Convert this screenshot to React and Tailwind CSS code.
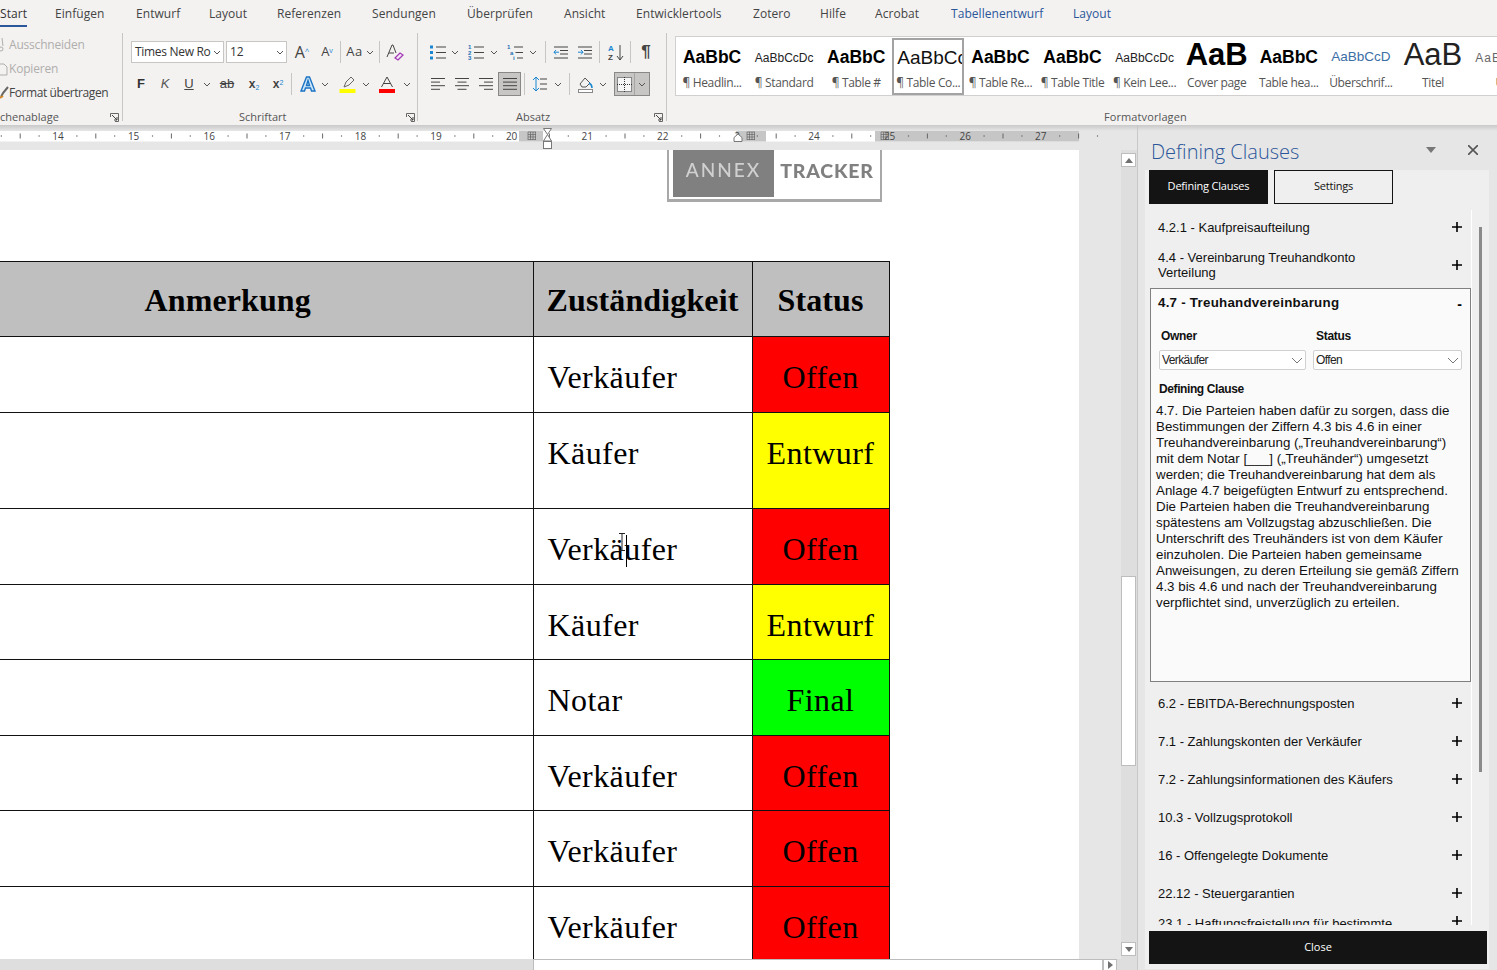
import React from 'react';

const UI = { fontFamily: '"Open Sans", "Noto Sans", sans-serif' };
const ARIAL = { fontFamily: '"Liberation Sans", Arial, sans-serif' };
const SERIF = { fontFamily: '"Liberation Serif", "Times New Roman", serif' };

const tabs = [
  ['Start', 0, 27, true], ['Einfügen', 55, 50], ['Entwurf', 136, 43], ['Layout', 209, 38], ['Referenzen', 277, 65],
  ['Sendungen', 372, 65], ['Überprüfen', 467, 67], ['Ansicht', 564, 41], ['Entwicklertools', 636, 86], ['Zotero', 753, 39],
  ['Hilfe', 820, 26], ['Acrobat', 875, 47], ['Tabellenentwurf', 951, 91, false, true], ['Layout', 1073, 38, false, true],
];

function Chevron({ className = '' }) {
  return <svg width="8" height="5" viewBox="0 0 8 5" className={className}><path d="M1 1l3 3 3-3" fill="none" stroke="#555" strokeWidth="1" /></svg>;
}

function Slot({ w, children, className = '' }) {
  return <div className={`flex h-[24px] shrink-0 items-center justify-center ${className}`} style={{ width: w }}>{children}</div>;
}

function Sep() {
  return <div className="mx-0 h-[22px] w-px shrink-0 bg-[#c8c6c4]" />;
}

function GroupSep() {
  return <div className="mt-[6px] h-[88px] w-px shrink-0 bg-[#c8c6c4]" />;
}

function Lines({ kind }) {
  const rows = {
    left: [[1, 15], [1, 10], [1, 15], [1, 10]],
    center: [[1, 15], [3.5, 12.5], [1, 15], [3.5, 12.5]],
    right: [[1, 15], [6, 15], [1, 15], [6, 15]],
    just: [[1, 15], [1, 15], [1, 15], [1, 15]],
  }[kind];
  return (
    <svg width="16" height="14" viewBox="0 0 16 14">
      {rows.map((r, i) => <path key={i} d={`M${r[0]} ${1.5 + i * 3.6}H${r[1]}`} stroke="#444" strokeWidth="1" />)}
    </svg>
  );
}

function Launcher() {
  return (
    <svg width="9" height="9" viewBox="0 0 9 9" className="shrink-0">
      <path d="M.5 4V.5H8.500V8.500H5" fill="none" stroke="#666" />
      <path d="M2 2l5 5M7 4v3H4" fill="none" stroke="#444" />
    </svg>
  );
}

function ListIcon({ type }) {
  return (
    <svg width="17" height="15" viewBox="0 0 17 15">
      {[2, 7.500, 13].map((y, i) => (
        <g key={i}>
          {type === 'bullet' && <rect x="0" y={y - 1.5} width="3" height="3" fill="#1a86d0" />}
          {type === 'num' && <text x="0" y={y + 2} fontSize="6" fontWeight="700" fill="#1a6fb5" fontFamily="Liberation Sans">{i + 1}</text>}
          {type === 'multi' && <text x={i * 3} y={y + 2} fontSize="6" fontWeight="700" fill="#1a6fb5" fontFamily="Liberation Sans">{['1', 'a', 'i'][i]}</text>}
          <path d={`M${type === 'multi' ? 7 + i * 1.5 : 6} ${y}H16`} stroke="#444" />
        </g>
      ))}
    </svg>
  );
}

function Indent({ flip }) {
  return (
    <svg width="16" height="13" viewBox="0 0 16 13">
      <path d="M1 1h14M7 4.500h8M7 8h8M1 12h14" stroke="#444" />
      <path d={flip ? 'M1 6.200h5M4 4l2 2.200L4 8.500' : 'M6 6.200H1M3 4L1 6.200l2 2.300'} fill="none" stroke="#1a86d0" />
    </svg>
  );
}

const styleItems = [
  ['AaBbC', '¶ Headlin...', 'bold'], ['AaBbCcDc', '¶ Standard', 'small'], ['AaBbC', '¶ Table #', 'bold'], ['AaBbCc', '¶ Table Co...', 'light', true],
  ['AaBbC', '¶ Table Re...', 'bold'], ['AaBbC', '¶ Table Title', 'bold'], ['AaBbCcDc', '¶ Kein Lee...', 'small'], ['AaB', 'Cover page', 'cover'],
  ['AaBbC', 'Table hea...', 'bold'], ['AaBbCcD', 'Überschrif...', 'blue'], ['AaB', 'Titel', 'title'], ['AaBbCcD', 'Unt', 'sub'],
];

const previewCls = {
  bold: 'text-[17.5px] font-bold text-black',
  small: 'text-[12px] text-[#222]',
  light: 'text-[19px] text-[#111] self-start ml-[3px]',
  cover: 'text-[31px] leading-[31px] mt-[-6px] font-bold text-black',
  blue: 'text-[13.5px] text-[#3a6ea5]',
  title: 'text-[31px] leading-[31px] mt-[-6px] font-extralight text-[#222]',
  sub: 'text-[12px] tracking-[1px] text-[#666]',
};

function StyleCard({ item }) {
  const [t, label, kind, sel] = item;
  return (
    <div className={`flex h-[57px] w-[72.1px] shrink-0 flex-col items-center overflow-hidden ${sel ? 'border-2 border-[#a3a3a3]' : 'border-2 border-transparent'}`}>
      <div className="flex h-[31px] w-full shrink-0 items-center justify-start overflow-hidden whitespace-nowrap pt-[4px]" style={ARIAL}>
        <span className={`${previewCls[kind]} ${kind === 'light' ? '' : 'mx-auto'}`}>{t}</span>
      </div>
      <div className="whitespace-nowrap pt-[4px] text-[12px] leading-[16px] tracking-[-0.35px] text-[#555]" style={UI}>{label}</div>
    </div>
  );
}

function Ribbon() {
  return (
    <div className="flex h-[98px] shrink-0 bg-[#f3f2f1] text-[#444]" style={UI}>
      {/* clipboard */}
      <div className="mt-[6px] flex h-[92px] w-[122px] shrink-0 flex-col overflow-hidden">
        <div className="flex h-[24px] shrink-0 items-center text-[12px] tracking-[-0.2px] text-[#b0aeac]">
          <svg width="9" height="14" viewBox="0 0 9 14" className="shrink-0"><path d="M2 0l1 8" stroke="#b0aeac" fill="none" /><circle cx="1" cy="11" r="2" fill="none" stroke="#b0aeac" /></svg>
          <span>Ausschneiden</span>
        </div>
        <div className="flex h-[24px] shrink-0 items-center text-[12px] tracking-[-0.2px] text-[#b0aeac]">
          <svg width="9" height="14" viewBox="0 0 9 14" className="shrink-0"><path d="M0 2h4l3 3v8H0" fill="none" stroke="#b0aeac" /></svg>
          <span>Kopieren</span>
        </div>
        <div className="flex h-[24px] shrink-0 items-center text-[12px] tracking-[-0.42px] text-[#444]">
          <svg width="9" height="14" viewBox="0 0 9 14" className="shrink-0"><path d="M8 1L3 7 1 11" stroke="#666" strokeWidth="2" fill="none" /><path d="M0 12l3-2" stroke="#d88a2b" strokeWidth="2" /></svg>
          <span>Format übertragen</span>
        </div>
        <div className="mt-[5px] flex h-[14px] shrink-0 items-center justify-between pr-[3px] text-[11px] text-[#555]">
          <span>chenablage</span>
          <Launcher />
        </div>
      </div>
      <GroupSep />

      {/* font */}
      <div className="mt-[13px] flex h-[85px] w-[294px] shrink-0 flex-col">
        <div className="flex h-[24px] shrink-0 items-center pl-[8px]">
          <div className="flex h-[22px] w-[93px] items-center justify-between border border-[#c8c6c4] bg-white pl-[3px] pr-[2px] text-[12px] tracking-[-0.3px] text-[#333]"><span>Times New Ro</span><Chevron /></div>
          <div className="ml-[2px] flex h-[22px] w-[61px] items-center justify-between border border-[#c8c6c4] bg-white pl-[3px] pr-[2px] text-[12px] text-[#333]"><span>12</span><Chevron /></div>
          <Slot w={24} className="ml-[3px]"><span className="relative text-[16px]" style={UI}>A<sup className="text-[8px] text-[#1a86d0]">^</sup></span></Slot>
          <Slot w={24} className="ml-[1px]"><span className="text-[13px]">A<sup className="text-[7px] text-[#1a86d0]">v</sup></span></Slot>
          <div className="ml-[1px]"><Sep /></div>
          <Slot w={36} className="ml-[1px]"><span className="text-[13px] tracking-[0.5px]">Aa</span><Chevron className="ml-[3px]" /></Slot>
          <div className="ml-[1px]"><Sep /></div>
          <Slot w={26} className="ml-[2px]">
            <svg width="18" height="17" viewBox="0 0 18 17"><path d="M1 13L6 1h1l3 8M3 9h5" stroke="#444" fill="none" /><path d="M9 14l5-5 3 2-5 5z" fill="#f3e6f7" stroke="#a33bb5" strokeWidth="1.300" /></svg>
          </Slot>
        </div>
        <div className="mt-[8px] flex h-[24px] shrink-0 items-center pl-[6px]">
          <Slot w={24}><span className="text-[13px] font-bold text-[#333]" style={ARIAL}>F</span></Slot>
          <Slot w={24}><span className="text-[13px] italic text-[#555]" style={ARIAL}>K</span></Slot>
          <Slot w={24}><span className="text-[13px] text-[#444] underline" style={ARIAL}>U</span></Slot>
          <Slot w={12}><Chevron /></Slot>
          <Slot w={28}><span className="text-[13px] text-[#444] line-through" style={ARIAL}>ab</span></Slot>
          <Slot w={22} className="ml-[2px]"><span className="text-[12px] font-bold text-[#444]" style={ARIAL}>x<sub className="text-[7px] font-normal text-[#1a86d0]">2</sub></span></Slot>
          <Slot w={26}><span className="text-[12px] font-bold text-[#444]" style={ARIAL}>x<sup className="text-[7px] font-normal text-[#1a86d0]">2</sup></span></Slot>
          <Sep />
          <Slot w={20} className="ml-[6px]">
            <svg width="16" height="16" viewBox="0 0 16 16"><path d="M1 15L6.500 1h3L15 15h-3.500l-1-3h-5l-1 3zM6.500 9.500h3L8 4.500z" fill="#cfe6f7" stroke="#1a73c4" strokeWidth="1.400" /></svg>
          </Slot>
          <Slot w={14}><Chevron /></Slot>
          <Slot w={26} className="ml-[2px]">
            <svg width="17" height="17" viewBox="0 0 17 17"><path d="M5 11l2-5 5-5 3 3-5 5z" fill="none" stroke="#666" /><rect y="13" width="16" height="4" x="0.500" fill="#ffff00" /></svg>
          </Slot>
          <Slot w={12}><Chevron /></Slot>
          <Slot w={28} className="ml-[1px]">
            <svg width="16" height="17" viewBox="0 0 16 17"><path d="M2.500 11L8 1l5.500 10M4.500 7.500h7" fill="none" stroke="#444" /><rect y="13" width="16" height="4" fill="#ff0000" /></svg>
          </Slot>
          <Slot w={12}><Chevron /></Slot>
        </div>
        <div className="mt-[14px] flex h-[14px] shrink-0 items-center justify-between pr-[2px] text-[11px] text-[#555]">
          <span className="ml-[116px]">Schriftart</span>
          <Launcher />
        </div>
      </div>
      <GroupSep />

      {/* paragraph */}
      <div className="mt-[13px] flex h-[85px] w-[248px] shrink-0 flex-col">
        <div className="flex h-[24px] shrink-0 items-center pl-[10px]">
          <Slot w={20}><ListIcon type="bullet" /></Slot><Slot w={14}><Chevron /></Slot>
          <Slot w={24} className="ml-[2px]"><ListIcon type="num" /></Slot><Slot w={12}><Chevron /></Slot>
          <Slot w={24} className="ml-[3px]"><ListIcon type="multi" /></Slot><Slot w={12}><Chevron /></Slot>
          <div className="ml-[6px]"><Sep /></div>
          <Slot w={24} className="ml-[3px]"><Indent /></Slot>
          <Slot w={24}><Indent flip /></Slot>
          <div className="ml-[2px]"><Sep /></div>
          <Slot w={30} className="pl-[4px]">
            <svg width="18" height="17" viewBox="0 0 18 17"><text x="0" y="7" fontSize="8" fontWeight="700" fill="#1a86d0" fontFamily="Liberation Sans">A</text><text x="0" y="16" fontSize="8" fontWeight="700" fill="#444" fontFamily="Liberation Sans">Z</text><path d="M12 1v15M9 12l3 4 3-4" fill="none" stroke="#444" /></svg>
          </Slot>
          <Sep />
          <Slot w={30}><span className="text-[17px] font-bold text-[#444]" style={ARIAL}>¶</span></Slot>
        </div>
        <div className="mt-[8px] flex h-[24px] shrink-0 items-center pl-[8px]">
          <Slot w={24}><Lines kind="left" /></Slot>
          <Slot w={24}><Lines kind="center" /></Slot>
          <Slot w={24}><Lines kind="right" /></Slot>
          <Slot w={23} className="border border-[#8a8886] bg-[#c8c6c4]"><Lines kind="just" /></Slot>
          <div className="ml-[3px]"><Sep /></div>
          <Slot w={28}>
            <svg width="16" height="16" viewBox="0 0 16 16"><path d="M5 1v14M2 4l3-3 3 3M2 12l3 3 3-3" fill="none" stroke="#1a86d0" /><path d="M9 3h7M9 8h7M9 13h7" stroke="#444" /></svg>
          </Slot>
          <Slot w={10}><Chevron /></Slot>
          <div className="ml-[6px]"><Sep /></div>
          <Slot w={26} className="ml-[2px]">
            <svg width="17" height="17" viewBox="0 0 17 17"><path d="M3 8l5-6 5 5-4 4H5z" fill="none" stroke="#555" /><path d="M12 7c2 1 3 3 3 5" stroke="#1a86d0" strokeWidth="1.500" fill="none" /><rect x="1.500" y="13.500" width="14" height="3" fill="#fff" stroke="#888" /></svg>
          </Slot>
          <Slot w={10}><Chevron /></Slot>
          <div className="ml-[6px] flex h-[24px] w-[36px] items-center border border-[#8a8886] bg-[#c8c6c4]">
            <div className="flex h-full w-[21px] items-center justify-center border-r border-[#a8a6a4]">
              <svg width="15" height="15" viewBox="0 0 15 15"><rect x="0.500" y="0.500" width="14" height="14" fill="#f5f5f5" stroke="#333" strokeDasharray="1 1" /><path d="M7.500 0v15M0 7.500h15" stroke="#333" strokeDasharray="1 1" /></svg>
            </div>
            <Slot w={14}><Chevron /></Slot>
          </div>
        </div>
        <div className="mt-[14px] flex h-[14px] shrink-0 items-center justify-between pr-[3px] text-[11px] text-[#555]">
          <span className="ml-[98px]">Absatz</span>
          <Launcher />
        </div>
      </div>
      <GroupSep />

      {/* styles */}
      <div className="flex min-w-0 flex-1 flex-col pl-[8px]">
        <div className="mt-[9px] flex h-[60px] shrink-0 overflow-hidden border border-[#d2d0ce] border-r-0 bg-white pt-[1px]">
          {styleItems.map((it, i) => <StyleCard key={i} item={it} />)}
        </div>
        <div className="mt-[13px] pl-[429px] text-[11px] leading-[16px] tracking-[0.1px] text-[#555]">Formatvorlagen</div>
      </div>
    </div>
  );
}

function GridMark({ x }) {
  return (
    <g transform={`translate(${x - 4} 132)`}>
      {[0, 2.5, 5, 7.5].map((v) => <path key={v} d={`M${v} 0v8M0 ${v}h8`} stroke="#666" strokeWidth="0.700" />)}
    </g>
  );
}

function Ruler() {
  const step = 75.6;
  const x0 = 58 - step;
  const ticks = [];
  const nums = [];
  for (let i = 0; i < 15; i++) {
    const base = x0 + i * step;
    ticks.push(<circle key={`a${i}`} cx={base + step / 4} cy="136" r="0.700" fill="#666" />);
    ticks.push(<path key={`b${i}`} d={`M${base + step / 2} 133.500v5`} stroke="#666" />);
    ticks.push(<circle key={`c${i}`} cx={base + (3 * step) / 4} cy="136" r="0.700" fill="#666" />);
    const n = 13 + i;
    if (i > 0 && n !== 23) nums.push(<text key={`n${i}`} x={base} y="140" textAnchor="middle" fontSize="10" fill="#444" fontFamily="Open Sans">{n}</text>);
  }
  return (
    <div className="h-[25px] shrink-0 bg-[#e6e6e6]">
      <svg width="1497" height="25" viewBox="0 125 1497 25" className="block">
        <defs>
          <linearGradient id="sh" x1="0" y1="0" x2="0" y2="1"><stop offset="0" stopColor="#c9c9c9" /><stop offset="1" stopColor="#e6e6e6" /></linearGradient>
        </defs>
        <rect x="0" y="125" width="1497" height="6" fill="url(#sh)" />
        <rect x="0" y="131" width="1079" height="10.500" fill="#fff" />
        <rect x="519" y="131" width="24" height="10.500" fill="#c6c6c6" />
        <rect x="736" y="131" width="30" height="10.500" fill="#c6c6c6" />
        <rect x="875" y="131" width="204" height="10.500" fill="#c6c6c6" />
        {ticks}
        {nums}
        <text x="737" y="140" textAnchor="middle" fontSize="10" fill="#444" fontFamily="Open Sans">2</text>
        <GridMark x={532} /><GridMark x={751} /><GridMark x={885} />
        <path d="M543.500 128.500h8l-4 6 4 6.500h-8l4-6.500z" fill="#fff" stroke="#777" />
        <rect x="543.500" y="141.500" width="8" height="7" fill="#fff" stroke="#777" />
        <path d="M734 137.500l4-3.500 4 3.500v4h-8z" fill="#fff" stroke="#777" />
        <path d="M1137.500 125v25" stroke="#c8c8c8" />
      </svg>
    </div>
  );
}

const rows = [
  ['Verkäufer', 'Offen', 76, 'bg-[#ff0000]'],
  ['Käufer', 'Entwurf', 96, 'bg-[#ffff00]'],
  ['Verkäufer', 'Offen', 76, 'bg-[#ff0000]', true],
  ['Käufer', 'Entwurf', 75, 'bg-[#ffff00]'],
  ['Notar', 'Final', 76, 'bg-[#00ff00]'],
  ['Verkäufer', 'Offen', 75, 'bg-[#ff0000]'],
  ['Verkäufer', 'Offen', 76, 'bg-[#ff0000]'],
  ['Verkäufer', 'Offen', 76, 'bg-[#ff0000]'],
];

function DocTable() {
  return (
    <table className="mt-[59px] w-[889px] table-fixed border-collapse text-[32px] leading-[37px] tracking-[0.42px] text-black" style={SERIF}>
      <colgroup><col className="w-[533px]" /><col className="w-[219px]" /><col className="w-[137px]" /></colgroup>
      <thead>
        <tr className="h-[75px] bg-[#bfbfbf] font-bold">
          <th className="border border-l-0 border-[#111] pr-[77px] pt-[3px] text-center align-middle font-bold tracking-[0.1px]">Anmerkung</th>
          <th className="border border-[#111] whitespace-nowrap pt-[3px] text-center align-middle font-bold tracking-[0.12px]">Zuständigkeit</th>
          <th className="border border-[#111] pt-[3px] text-center align-middle font-bold tracking-[0.1px]">Status</th>
        </tr>
      </thead>
      <tbody>
        {rows.map((r, i) => (
          <tr key={i} style={{ height: r[2] }}>
            <td className="border border-l-0 border-[#111]" />
            <td className="border border-[#111] pl-[14px] pt-[22px] align-top">
              {r[4] ? (
                <span className="relative">
                  Verkäufer
                  <span className="absolute left-[78px] top-[4px] h-[32px] w-px bg-black" />
                  <svg width="8" height="18" viewBox="0 0 8 18" className="absolute left-[70px] top-[2px]"><path d="M1 .5h6M4 .5v17M1 17.500h6" stroke="#222" fill="none" /></svg>
                </span>
              ) : r[0]}
            </td>
            <td className={`border border-[#111] pt-[22px] text-center align-top ${r[3]}`}>{r[1]}</td>
          </tr>
        ))}
      </tbody>
    </table>
  );
}

function Logo() {
  return (
    <div className="ml-[667px] flex h-[52px] w-[215px] items-stretch border-x-2 border-b-[3px] border-[#a8a8a8] bg-white pb-[2px] pl-[4px] blur-[0.4px]" style={{ fontFamily: 'Lato, sans-serif' }}>
      <div className="flex w-[101px] items-center justify-center bg-[#808080] pb-[6px] text-[19px] font-medium tracking-[2px] text-[#d0d0d0]">ANNEX</div>
      <div className="flex flex-1 items-center justify-center pb-[6px] text-[19.5px] font-black tracking-[0.8px] text-[#808080]">TRACKER</div>
    </div>
  );
}

function ScrollBtn({ up }) {
  return (
    <div className="flex h-[14px] w-[15px] items-center justify-center border border-[#bdbdbd] bg-white">
      <svg width="8" height="5" viewBox="0 0 8 5"><path d={up ? 'M0 5L4 0l4 5z' : 'M0 0l4 5 4-5z'} fill="#707070" /></svg>
    </div>
  );
}

const clauseLines = [
  '4.7. Die Parteien haben dafür zu sorgen, dass die',
  'Bestimmungen der Ziffern 4.3 bis 4.6 in einer',
  'Treuhandvereinbarung („Treuhandvereinbarung“)',
  'mit dem Notar [___] („Treuhänder“) umgesetzt',
  'werden; die Treuhandvereinbarung hat dem als',
  'Anlage 4.7 beigefügten Entwurf zu entsprechend.',
  'Die Parteien haben die Treuhandvereinbarung',
  'spätestens am Vollzugstag abzuschließen. Die',
  'Unterschrift des Treuhänders ist von dem Käufer',
  'einzuholen. Die Parteien haben gemeinsame',
  'Anweisungen, zu deren Erteilung sie gemäß Ziffern',
  '4.3 bis 4.6 und nach der Treuhandvereinbarung',
  'verpflichtet sind, unverzüglich zu erteilen.',
];

function Plus() {
  return <svg width="10" height="10" viewBox="0 0 10 10" className="shrink-0"><path d="M5 0v10M0 5h10" stroke="#000" strokeWidth="1.600" /></svg>;
}

function ClauseRow({ children, className = 'h-[38px] items-center' }) {
  return (
    <div className={`flex justify-between pl-[9px] pr-[9px] ${className}`}>
      <div className="whitespace-nowrap text-[13px] leading-[15px] text-[#111]">{children}</div>
      <Plus />
    </div>
  );
}

function FakeSelect({ label, w }) {
  return (
    <div className={`flex h-[20px] items-center justify-between rounded-[2px] border border-[#d0d0d0] bg-white pl-[2px] pr-[2px] text-[12px] tracking-[-0.6px] text-[#222] ${w}`}>
      <span>{label}</span>
      <svg width="12" height="7" viewBox="0 0 12 7"><path d="M1 1l5 5 5-5" fill="none" stroke="#777" /></svg>
    </div>
  );
}

function Panel() {
  return (
    <aside className="flex w-[360px] shrink-0 flex-col border-l border-[#c8c8c8] bg-[#e6e6e6]">
      <div className="flex h-[20px] shrink-0 items-start pl-[13px]">
        <span className="mt-[-12px] w-[153px] whitespace-nowrap text-[20px] font-light leading-[28px] text-[#2b579a]" style={UI}>Defining Clauses</span>
        <svg width="10" height="6" viewBox="0 0 10 6" className="ml-[122px] mt-[-3px] shrink-0"><path d="M0 0h10L5 6z" fill="#777" /></svg>
        <svg width="10" height="10" viewBox="0 0 10 10" className="ml-[32px] mt-[-5px] shrink-0"><path d="M0 0l10 10M10 0L0 10" stroke="#555" strokeWidth="1.600" /></svg>
      </div>
      <div className="mb-[1px] ml-[7px] flex w-[344px] min-h-0 flex-1 flex-col bg-[#efefef] pb-[5px] pl-[4px]" style={ARIAL}>
        <div className="flex shrink-0 gap-[6px] pb-[6px]" style={UI}>
          <div className="flex h-[34px] w-[119px] items-center justify-center bg-[#141414] pb-[2px] text-[11px] tracking-[-0.2px] text-white">Defining Clauses</div>
          <div className="flex h-[34px] w-[119px] items-center justify-center border border-[#141414] pb-[2px] text-[11px] tracking-[-0.2px] text-[#111]">Settings</div>
        </div>
        <div className="flex min-h-0 flex-1">
          <div className="h-[715px] w-[323px] shrink-0 overflow-hidden border-r border-white">
            <div className="pt-[1px]">
              <ClauseRow className="h-[32px] items-center">4.2.1 - Kaufpreisaufteilung</ClauseRow>
              <ClauseRow className="h-[44px] items-center">4.4 - Vereinbarung Treuhandkonto<br />Verteilung</ClauseRow>
            </div>
            <div className="ml-[1px] mt-[1px] h-[394px] w-[321px] border border-[#808080] bg-[#fafafa]">
              <div className="flex items-start justify-between pl-[7px] pr-[8px] pt-[6px]">
                <div className="text-[13.330px] font-bold leading-[16px] tracking-[0.25px] text-[#111]">4.7 - Treuhandvereinbarung</div>
                <div className="mt-[1px] text-[14px] font-bold leading-[16px]">-</div>
              </div>
              <div className="mt-[17px] flex gap-[2px] pl-[9px] pr-[8px]">
                <div className="flex w-[153px] flex-col">
                  <div className="pl-[1px] text-[12px] font-bold leading-[14px] tracking-[-0.3px] text-[#111]">Owner</div>
                  <div className="mt-[7px] -ml-[1px]"><FakeSelect label="Verkäufer" w="w-[147px]" /></div>
                </div>
                <div className="flex flex-1 flex-col">
                  <div className="pl-[3px] text-[12px] font-bold leading-[14px] tracking-[-0.3px] text-[#111]">Status</div>
                  <div className="mt-[7px]"><FakeSelect label="Offen" w="w-[149px]" /></div>
                </div>
              </div>
              <div className="mt-[12px] pl-[8px] text-[12px] font-bold leading-[14px] tracking-[-0.4px] text-[#111]">Defining Clause</div>
              <div className="mt-[7px] whitespace-nowrap pl-[5px] text-[13.330px] leading-[16px] text-[#111]">
                {clauseLines.map((l) => <div key={l}>{l}</div>)}
              </div>
            </div>
            <div className="pt-[2px]">
              <ClauseRow>6.2 - EBITDA-Berechnungsposten</ClauseRow>
              <ClauseRow>7.1 - Zahlungskonten der Verkäufer</ClauseRow>
              <ClauseRow>7.2 - Zahlungsinformationen des Käufers</ClauseRow>
              <ClauseRow>10.3 - Vollzugsprotokoll</ClauseRow>
              <ClauseRow>16 - Offengelegte Dokumente</ClauseRow>
              <ClauseRow>22.12 - Steuergarantien</ClauseRow>
              <ClauseRow className="h-[38px] items-start pt-[4px]">23.1 - Haftungsfreistellung für bestimmte</ClauseRow>
            </div>
          </div>
          <div className="ml-[7px] mt-[17px] h-[545px] w-[3px] bg-[#8a8a8a]" />
        </div>
        <div className="mt-[3px] flex h-[33px] w-[338px] shrink-0 items-center justify-center bg-[#141414] text-[11px] text-white" style={UI}>Close</div>
      </div>
    </aside>
  );
}

export default function App() {
  return (
    <div className="flex h-[970px] w-[1497px] flex-col overflow-hidden bg-[#e6e6e6]">
      <div className="flex h-[27px] shrink-0 bg-[#f3f2f1] text-[12px] tracking-[0.05px] text-[#444]" style={UI}>
        {tabs.map(([t, x, w, active, blue], i) => {
          const prev = i === 0 ? null : tabs[i - 1];
          const ml = prev ? x - prev[1] - prev[2] : 0;
          return (
            <div key={i} className={`flex h-[27px] items-center whitespace-nowrap ${active ? 'border-b-[2px] border-[#2b579a] pt-[2px] text-[#333]' : ''} ${blue ? 'text-[#2b579a]' : ''}`} style={{ marginLeft: ml, width: w }}>{t}</div>
          );
        })}
      </div>
      <Ribbon />
      <Ruler />
      <div className="flex min-h-0 flex-1">
        <div className="flex w-[1137px] shrink-0 flex-col">
          <div className="flex min-h-0 flex-1">
            <div className="w-[1079px] shrink-0 overflow-hidden bg-white">
              <Logo />
              <DocTable />
            </div>
            <div className="ml-[42px] flex w-[16px] shrink-0 flex-col items-stretch bg-[#dedede]">
              <div className="mt-[3px]"><ScrollBtn up /></div>
              <div className="mt-[409px] h-[190px] w-[15px] border border-[#bdbdbd] bg-white" />
              <div className="mt-auto mb-[3px]"><ScrollBtn /></div>
            </div>
          </div>
          <div className="flex h-[11px] shrink-0 bg-[#dedede]">
            <div className="ml-[533px] h-full w-[570px] border border-[#bdbdbd] border-b-0 bg-white" />
            <div className="flex h-full w-[14px] items-center justify-center border border-[#bdbdbd] border-b-0 bg-white">
              <svg width="5" height="8" viewBox="0 0 5 8"><path d="M0 0l5 4-5 4z" fill="#707070" /></svg>
            </div>
          </div>
        </div>
        <Panel />
      </div>
    </div>
  );
}
